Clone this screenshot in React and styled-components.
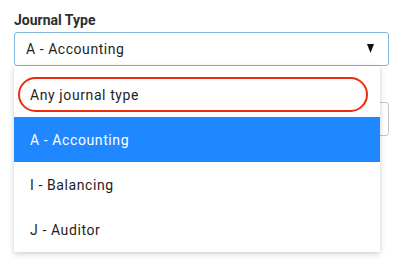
import React from "react";
import styled, { createGlobalStyle } from "styled-components";

const Global = createGlobalStyle`
  html, body { margin: 0; padding: 0; background: #fff; }
  body { font-family: Roboto, "Noto Sans", Arial, sans-serif; }
  * { box-sizing: border-box; }
`;

const Page = styled.div`
  width: 405px;
  height: 266px;
  padding: 12px 16px 0 14px;
  overflow: hidden;
`;

const Label = styled.div`
  font-size: 14px;
  font-weight: 700;
  line-height: 17px;
  color: #2e2e2e;
  margin-bottom: 3px;
`;

const Field = styled.div`
  position: relative;
`;

const Select = styled.div`
  height: 34px;
  border: 1.5px solid #82b6de;
  border-radius: 3px;
  display: flex;
  align-items: center;
  justify-content: space-between;
  padding: 0 14px 0 11px;
  font-size: 14px;
  letter-spacing: 0.55px;
  color: #1e1e1e;
`;

const Arrow = styled.svg`
  width: 7px;
  height: 9px;
  margin-top: -2px;
`;

const Input = styled.div`
  margin-top: 36px;
  height: 34px;
  border: 1px solid #c6c6c6;
  border-radius: 3px;
`;

const Menu = styled.ul`
  position: absolute;
  top: 34px;
  left: 0;
  width: 366px;
  margin: 0;
  padding: 6px 0 0;
  list-style: none;
  background: #fff;
  box-shadow: 0 2px 6px rgba(0, 0, 0, 0.18), 0 0 2px rgba(0, 0, 0, 0.06);
  z-index: 2;
`;

const Option = styled.li`
  height: 45px;
  display: flex;
  align-items: center;
  padding-left: 16px;
  font-size: 14px;
  letter-spacing: 0.6px;
  color: ${(p) => (p.$selected ? "#fff" : "#1e1e1e")};
  background: ${(p) => (p.$selected ? "#1f87ff" : "transparent")};
`;

const FocusOption = styled.li`
  height: 45px;
  padding: 5px 12px 5px 4px;
`;

const FocusRing = styled.div`
  height: 35px;
  border: 2px solid #ee2b0f;
  border-radius: 18px;
  display: flex;
  align-items: center;
  padding-left: 10px;
  font-size: 14px;
  letter-spacing: 0.6px;
  color: #1e1e1e;
`;

const options = ["A - Accounting", "I - Balancing", "J - Auditor"];

export default function App() {
  return (
    <Page>
      <Global />
      <Label>Journal Type</Label>
      <Field>
        <Select>
          <span>A - Accounting</span>
          <Arrow viewBox="0 0 7 9">
            <polygon points="0,0 7,0 3.5,9" fill="#111" />
          </Arrow>
        </Select>
        <Menu>
          <FocusOption>
            <FocusRing>Any journal type</FocusRing>
          </FocusOption>
          {options.map((o) => (
            <Option key={o} $selected={o === "A - Accounting"}>
              {o}
            </Option>
          ))}
        </Menu>
      </Field>
      <Input />
    </Page>
  );
}
